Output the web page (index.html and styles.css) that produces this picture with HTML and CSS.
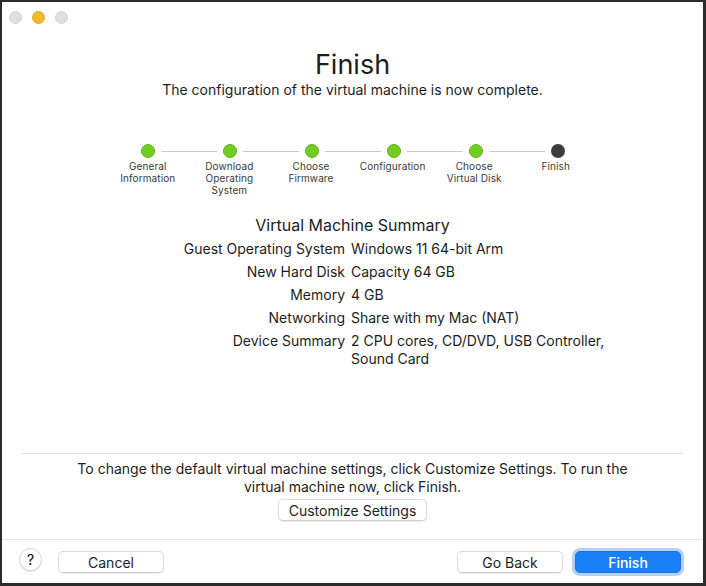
FILE: index.html
```html
<!DOCTYPE html>
<html lang="en">
<head>
    <meta charset="UTF-8">
    <meta name="viewport" content="width=device-width, initial-scale=1.0">
    <title>Finish</title>
    <link rel="stylesheet" href="styles.css">
</head>
<body>
    <div class="window">
        <div class="titlebar">
            <span class="light"></span>
            <span class="light yellow"></span>
            <span class="light"></span>
        </div>

        <div class="content">
            <h1 class="title">Finish</h1>
            <p class="subtitle">The configuration of the virtual machine is now complete.</p>

            <div class="steps">
                <div class="track">
                    <span class="dot done"></span><span class="line"></span>
                    <span class="dot done"></span><span class="line"></span>
                    <span class="dot done"></span><span class="line"></span>
                    <span class="dot done"></span><span class="line"></span>
                    <span class="dot done"></span><span class="line"></span>
                    <span class="dot current"></span>
                </div>
                <div class="labels">
                    <span>General<br>Information</span>
                    <span>Download<br>Operating<br>System</span>
                    <span>Choose<br>Firmware</span>
                    <span>Configuration</span>
                    <span>Choose<br>Virtual Disk</span>
                    <span>Finish</span>
                </div>
            </div>

            <h2 class="summary-title">Virtual Machine Summary</h2>
            <div class="summary">
                <div class="key">Guest Operating System</div>
                <div class="val">Windows 11 64-bit Arm</div>
                <div class="key">New Hard Disk</div>
                <div class="val">Capacity 64 GB</div>
                <div class="key">Memory</div>
                <div class="val">4 GB</div>
                <div class="key">Networking</div>
                <div class="val">Share with my Mac (NAT)</div>
                <div class="key">Device Summary</div>
                <div class="val">2 CPU cores, CD/DVD, USB Controller,<br>Sound Card</div>
            </div>
        </div>

        <div class="note">
            <p>To change the default virtual machine settings, click Customize Settings. To run the virtual machine now, click Finish.</p>
            <button class="btn">Customize Settings</button>
        </div>

        <div class="footer">
            <button class="help">?</button>
            <button class="btn wide">Cancel</button>
            <div class="spacer"></div>
            <button class="btn wide">Go Back</button>
            <button class="btn wide primary">Finish</button>
        </div>
    </div>
</body>
</html>
```

FILE: styles.css
```css
* {
    box-sizing: border-box;
}
html, body {
    margin: 0;
    padding: 0;
    background: #2b2b2b;
}
body {
    font-family: "Inter", "Liberation Sans", sans-serif;
    color: #1d1d1d;
}
.window {
    width: 706px;
    height: 586px;
    background: #fff;
    border-style: solid;
    border-color: #2b2b2b;
    border-width: 2px 3px 3px 2px;
    display: flex;
    flex-direction: column;
}
.titlebar {
    height: 30px;
    display: flex;
    align-items: center;
    gap: 10px;
    padding: 0 0 0 7px;
}
.light {
    width: 13px;
    height: 13px;
    border-radius: 50%;
    background: #dfdfdf;
    border: 1px solid #d3d3d3;
}
.light.yellow {
    background: #f7b92c;
    border-color: #e5a723;
}
.content {
    flex: 1;
}
.title {
    margin: 17px 0 0;
    font-size: 27px;
    font-weight: 400;
    text-align: center;
    line-height: 32px;
}
.subtitle {
    margin: 0;
    font-size: 14px;
    text-align: center;
    line-height: 18px;
}
.steps {
    margin: 45px 0 0 105px;
    width: 490px;
}
.track {
    display: flex;
    align-items: center;
    padding-left: 34px;
}
.dot {
    width: 14px;
    height: 14px;
    border-radius: 50%;
    flex: none;
}
.dot.done {
    background: #72cd22;
    border: 1px solid #5fb515;
}
.dot.current {
    background: #3d3d3d;
}
.line {
    width: 56px;
    height: 1px;
    margin: 0 6px;
    background: #c9c9c9;
}
.labels {
    display: grid;
    grid-template-columns: repeat(6, 81.6px);
    margin-top: 2px;
    font-size: 10px;
    line-height: 12px;
    letter-spacing: 0.1px;
    color: #3a3a3a;
    text-align: center;
}
.summary-title {
    margin: 19px 0 0;
    font-size: 16px;
    font-weight: 400;
    text-align: center;
    line-height: 20px;
}
.summary {
    display: grid;
    grid-template-columns: 343px 1fr;
    column-gap: 6px;
    row-gap: 5px;
    margin-top: 5px;
    font-size: 14px;
    line-height: 18px;
}
.key {
    text-align: right;
}
.note {
    margin: 0 20px;
    border-top: 1px solid #e3e3e3;
    padding: 6px 0 18px;
    display: flex;
    flex-direction: column;
    align-items: center;
    text-align: center;
}
.note p {
    margin: 0 0 3px;
    max-width: 580px;
    font-size: 14px;
    line-height: 18px;
}
.btn {
    font-family: inherit;
    font-size: 14px;
    color: #1d1d1d;
    height: 22px;
    padding: 0 10px;
    background: #fff;
    border: 1px solid #dcdcdc;
    border-bottom-color: #cfcfcf;
    border-radius: 5px;
    box-shadow: 0 1px 1px rgba(0, 0, 0, 0.08);
}
.footer {
    border-top: 1px solid #e6e6e6;
    display: flex;
    align-items: center;
    gap: 12px;
    padding: 11px 22px 10px 17px;
}
.help {
    width: 23px;
    height: 23px;
    border-radius: 50%;
    background: #fff;
    border: 1px solid #d8d8d8;
    box-shadow: 0 1px 1px rgba(0, 0, 0, 0.1);
    font-family: inherit;
    font-size: 14px;
    padding: 0;
    margin: -5px 4px 0 0;
}
.wide {
    width: 106px;
}
.spacer {
    flex: 1;
}
.primary {
    background: #1a80f8;
    border-color: #1a72e0;
    color: #fff;
    font-weight: 500;
    box-shadow: 0 0 0 3px rgba(90, 150, 245, 0.45);
}
```
